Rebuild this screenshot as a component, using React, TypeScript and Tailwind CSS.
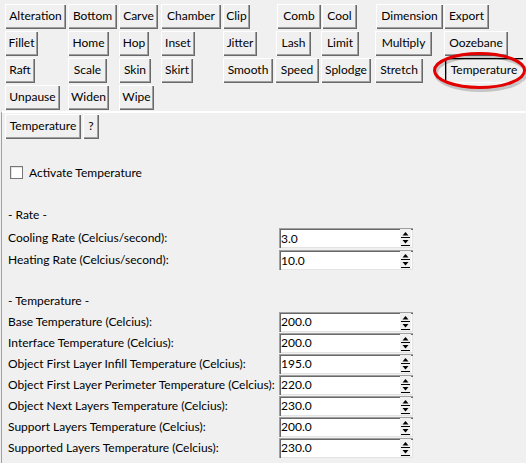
import React from "react";

type B = { label: string; w: string; active?: boolean };

const rows: (B | null)[][] = [
  [
    { label: "Alteration", w: "w-[61px]" },
    { label: "Bottom", w: "w-[49px]" },
    { label: "Carve", w: "w-[39px]" },
    { label: "Chamber", w: "w-[60px]" },
    { label: "Clip", w: "w-[27px]" },
    { label: "Comb", w: "w-[44px] ml-[2px]" },
    { label: "Cool", w: "w-[35px] ml-[1px]" },
    { label: "Dimension", w: "w-[67px] ml-[1px]" },
    { label: "Export", w: "w-[45px]" },
  ],
  [
    { label: "Fillet", w: "w-[33px]" },
    { label: "Home", w: "w-[41px]" },
    { label: "Hop", w: "w-[30px]" },
    { label: "Inset", w: "w-[34px]" },
    { label: "Jitter", w: "w-[34px]" },
    { label: "Lash", w: "w-[35px] ml-[1px]" },
    { label: "Limit", w: "w-[38px]" },
    { label: "Multiply", w: "w-[57px]" },
    { label: "Oozebane", w: "w-[64px]" },
  ],
  [
    { label: "Raft", w: "w-[30px]" },
    { label: "Scale", w: "w-[39px]" },
    { label: "Skin", w: "w-[32px]" },
    { label: "Skirt", w: "w-[32px]" },
    { label: "Smooth", w: "w-[50px]" },
    { label: "Speed", w: "w-[44px]" },
    { label: "Splodge", w: "w-[50px]" },
    { label: "Stretch", w: "w-[48px]" },
    { label: "Temperature", w: "w-[78px] ml-[1px]", active: true },
  ],
  [
    { label: "Unpause", w: "w-[55px]" },
    { label: "Widen", w: "w-[41px]" },
    { label: "Wipe", w: "w-[35px]" },
    null,
    null,
    null,
    null,
    null,
    null,
  ],
];

const raised =
  "shadow-[inset_1px_1px_#ffffff,inset_-1px_-1px_#696969,inset_-2px_-2px_#a0a0a0]";
const sunken =
  "shadow-[inset_1px_1px_#000000,inset_2px_2px_#a0a0a0,inset_-1px_-1px_#ffffff]";

function Btn({ label, w, active }: B) {
  return (
    <div
      className={`h-[25px] ${w} flex items-center justify-center pb-[1px] text-black whitespace-nowrap ${
        active ? sunken : raised
      }`}
    >
      {label}
    </div>
  );
}

function Arrows() {
  return (
    <svg width="11" height="18" viewBox="0 0 11 18" className="block">
      <path d="M5.5 3 L8.5 6.5 L2.5 6.5 Z" fill="#000" />
      <line x1="1" y1="8.5" x2="10" y2="8.5" stroke="#000" strokeWidth="1" />
      <path d="M2.5 11 L8.5 11 L5.5 14.5 Z" fill="#000" />
      <line x1="1" y1="16.5" x2="10" y2="16.5" stroke="#000" strokeWidth="1" />
    </svg>
  );
}

function Spin({ value }: { value: string }) {
  return (
    <div className="w-[134px] h-[20px] bg-white flex items-center shadow-[inset_1px_1px_#a0a0a0,inset_2px_2px_#696969,inset_-1px_-1px_#e3e3e3]">
      <span className="pl-[2px] flex-1 text-black leading-none pt-[1px]">{value}</span>
      <div className="w-[11px] h-[18px] mr-[2px] bg-[#f0f0f0]">
        <Arrows />
      </div>
    </div>
  );
}

function Row({ label, value, h }: { label: string; value: string; h: string }) {
  return (
    <div className={`flex items-center ${h}`}>
      <div className="w-[277px] pl-[6px] whitespace-nowrap text-black">{label}</div>
      <Spin value={value} />
    </div>
  );
}

const temps: [string, string][] = [
  ["Base Temperature (Celcius):", "200.0"],
  ["Interface Temperature (Celcius):", "200.0"],
  ["Object First Layer Infill Temperature (Celcius):", "195.0"],
  ["Object First Layer Perimeter Temperature (Celcius):", "220.0"],
  ["Object Next Layers Temperature (Celcius):", "230.0"],
  ["Support Layers Temperature (Celcius):", "200.0"],
  ["Supported Layers Temperature (Celcius):", "230.0"],
];

export default function App() {
  return (
    <div
      className="relative w-[526px] h-[463px] overflow-hidden bg-[#f0f0f0] text-[12px] text-black"
      style={{ fontFamily: 'Lato, "Noto Sans", sans-serif' }}
    >
      <div className="pt-[4px] pl-[5px] grid grid-cols-[63px_51px_42px_62px_52px_46px_54px_69px_82px] auto-rows-[25px] gap-y-[2px] justify-items-start">
        {rows.flat().map((b, i) => (b ? <Btn key={i} {...b} /> : <div key={i} />))}
      </div>

      <div className="mt-[1px] ml-[1px] border-t-2 border-t-white border-l border-l-[#a0a0a0] h-[400px]">
        <div className="pt-[1px] pl-[3px] flex gap-[2px]">
          <Btn label="Temperature" w="w-[76px]" />
          <Btn label="?" w="w-[16px]" />
        </div>

        <div className="mt-[23px] h-[21px] flex items-center pl-[8px]">
          <div className="w-[13px] h-[13px] bg-white border border-[#767676] shadow-[inset_1px_1px_#e3e3e3]" />
          <span className="ml-[6px]">Activate Temperature</span>
        </div>

        <div className="mt-[21px] h-[21px] flex items-center pl-[6px]">- Rate -</div>
        <div className="mt-[2px]">
          <Row label="Cooling Rate (Celcius/second):" value="3.0" h="h-[22px]" />
          <Row label="Heating Rate (Celcius/second):" value="10.0" h="h-[22px]" />
        </div>

        <div className="mt-[19px] h-[21px] flex items-center pl-[6px]">- Temperature -</div>
        <div>
          {temps.map(([l, v]) => (
            <Row key={l} label={l} value={v} h="h-[21px]" />
          ))}
        </div>
      </div>

      <svg
        className="absolute left-[428px] top-[48px] pointer-events-none"
        width="98"
        height="46"
        viewBox="0 0 98 46"
      >
        <ellipse cx="53" cy="25" rx="45" ry="17" fill="none" stroke="#000" strokeOpacity="0.18" strokeWidth="4" />
        <ellipse cx="51.5" cy="22.5" rx="45" ry="17" fill="none" stroke="#e30000" strokeWidth="3" />
      </svg>
    </div>
  );
}
